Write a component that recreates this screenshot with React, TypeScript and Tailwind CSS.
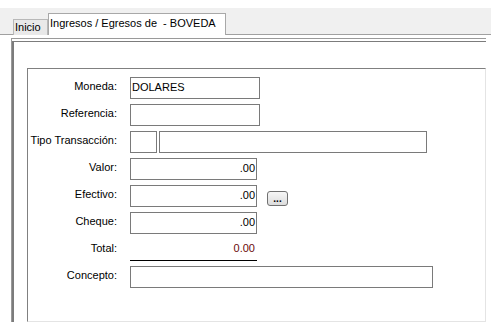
const FONT = "font-['Liberation_Sans',Arial,sans-serif]";

function Label({ text }: { text: string }) {
  return (
    <div className="w-[90px] shrink-0 pt-[2px] pr-px text-right leading-[15px] text-black">{text}</div>
  );
}

function Box({ w, value, right }: { w: string; value?: string; right?: boolean }) {
  return (
    <div
      className={`${w} h-[22px] shrink-0 border border-[#7a7a7a] bg-white px-px pt-px leading-[16px] text-black ${
        right ? 'text-right' : 'text-left'
      }`}
    >
      {value}
    </div>
  );
}

function Row({ label, children }: { label: string; children: React.ReactNode }) {
  return (
    <div className="flex h-[22px] items-start gap-[12px]">
      <Label text={label} />
      {children}
    </div>
  );
}

export default function App() {
  return (
    <div className={`${FONT} h-[332px] w-[491px] overflow-hidden bg-white text-[11px]`}>
      <div className="h-[8px]" />
      {/* tab strip */}
      <div className="flex h-[27px] items-end border-b border-[#a0a0a0] bg-[#f0f0f0] pl-[13px]">
        <div className="mb-[-1px] flex h-[16px] w-[35px] items-center border border-b-0 border-[#b8b8b8] bg-[#e9e9e9] pl-px leading-none">
          Inicio
        </div>
        <div className="mb-[-1px] flex h-[22px] w-[178px] items-start border border-b-0 border-[#a8a8a8] bg-white pt-[3px] pl-px leading-[13px]">
          Ingresos / Egresos de&nbsp;&nbsp;- BOVEDA
        </div>
      </div>
      <div className="h-[3px]" />
      {/* outer panel */}
      <div className="ml-[11px] h-[284px] w-[475px] border-t border-l border-[#9a9a9a]">
        <div className="mt-[2px] h-[281px] border-t border-l-2 border-[#7c7c7c] pl-[13px] pt-[26px]">
          {/* group box */}
          <div className="h-[254px] w-[459px] border border-t-[#808080] border-l-[#808080] border-r-[#e4e4e4] border-b-[#e4e4e4] pt-[8px]">
            <div className="flex flex-col gap-[5px]">
              <Row label="Moneda:">
                <Box w="w-[130px]" value="DOLARES" />
              </Row>
              <Row label="Referencia:">
                <Box w="w-[130px]" />
              </Row>
              <Row label="Tipo Transacción:">
                <div className="flex gap-[2px]">
                  <Box w="w-[27px]" />
                  <Box w="w-[268px]" />
                </div>
              </Row>
              <Row label="Valor:">
                <Box w="w-[127px]" value=".00" right />
              </Row>
              <Row label="Efectivo:">
                <Box w="w-[127px]" value=".00" right />
                <button className="ml-[-2px] mt-[6px] flex h-[15px] w-[21px] items-end justify-center rounded-[3px] border border-[#707070] bg-gradient-to-b from-[#f6f6f6] to-[#dcdcdc] pb-[2px] text-[10px] font-bold leading-[8px] text-black">
                  ...
                </button>
              </Row>
              <Row label="Cheque:">
                <Box w="w-[127px]" value=".00" right />
              </Row>
              <Row label="Total:">
                <div className="h-[22px] w-[127px] border-b border-black pt-[2px] pr-[2px] text-right leading-[15px] text-[#6b0b0b]">
                  0.00
                </div>
              </Row>
              <Row label="Concepto:">
                <Box w="w-[303px]" />
              </Row>
            </div>
          </div>
        </div>
      </div>
    </div>
  );
}
